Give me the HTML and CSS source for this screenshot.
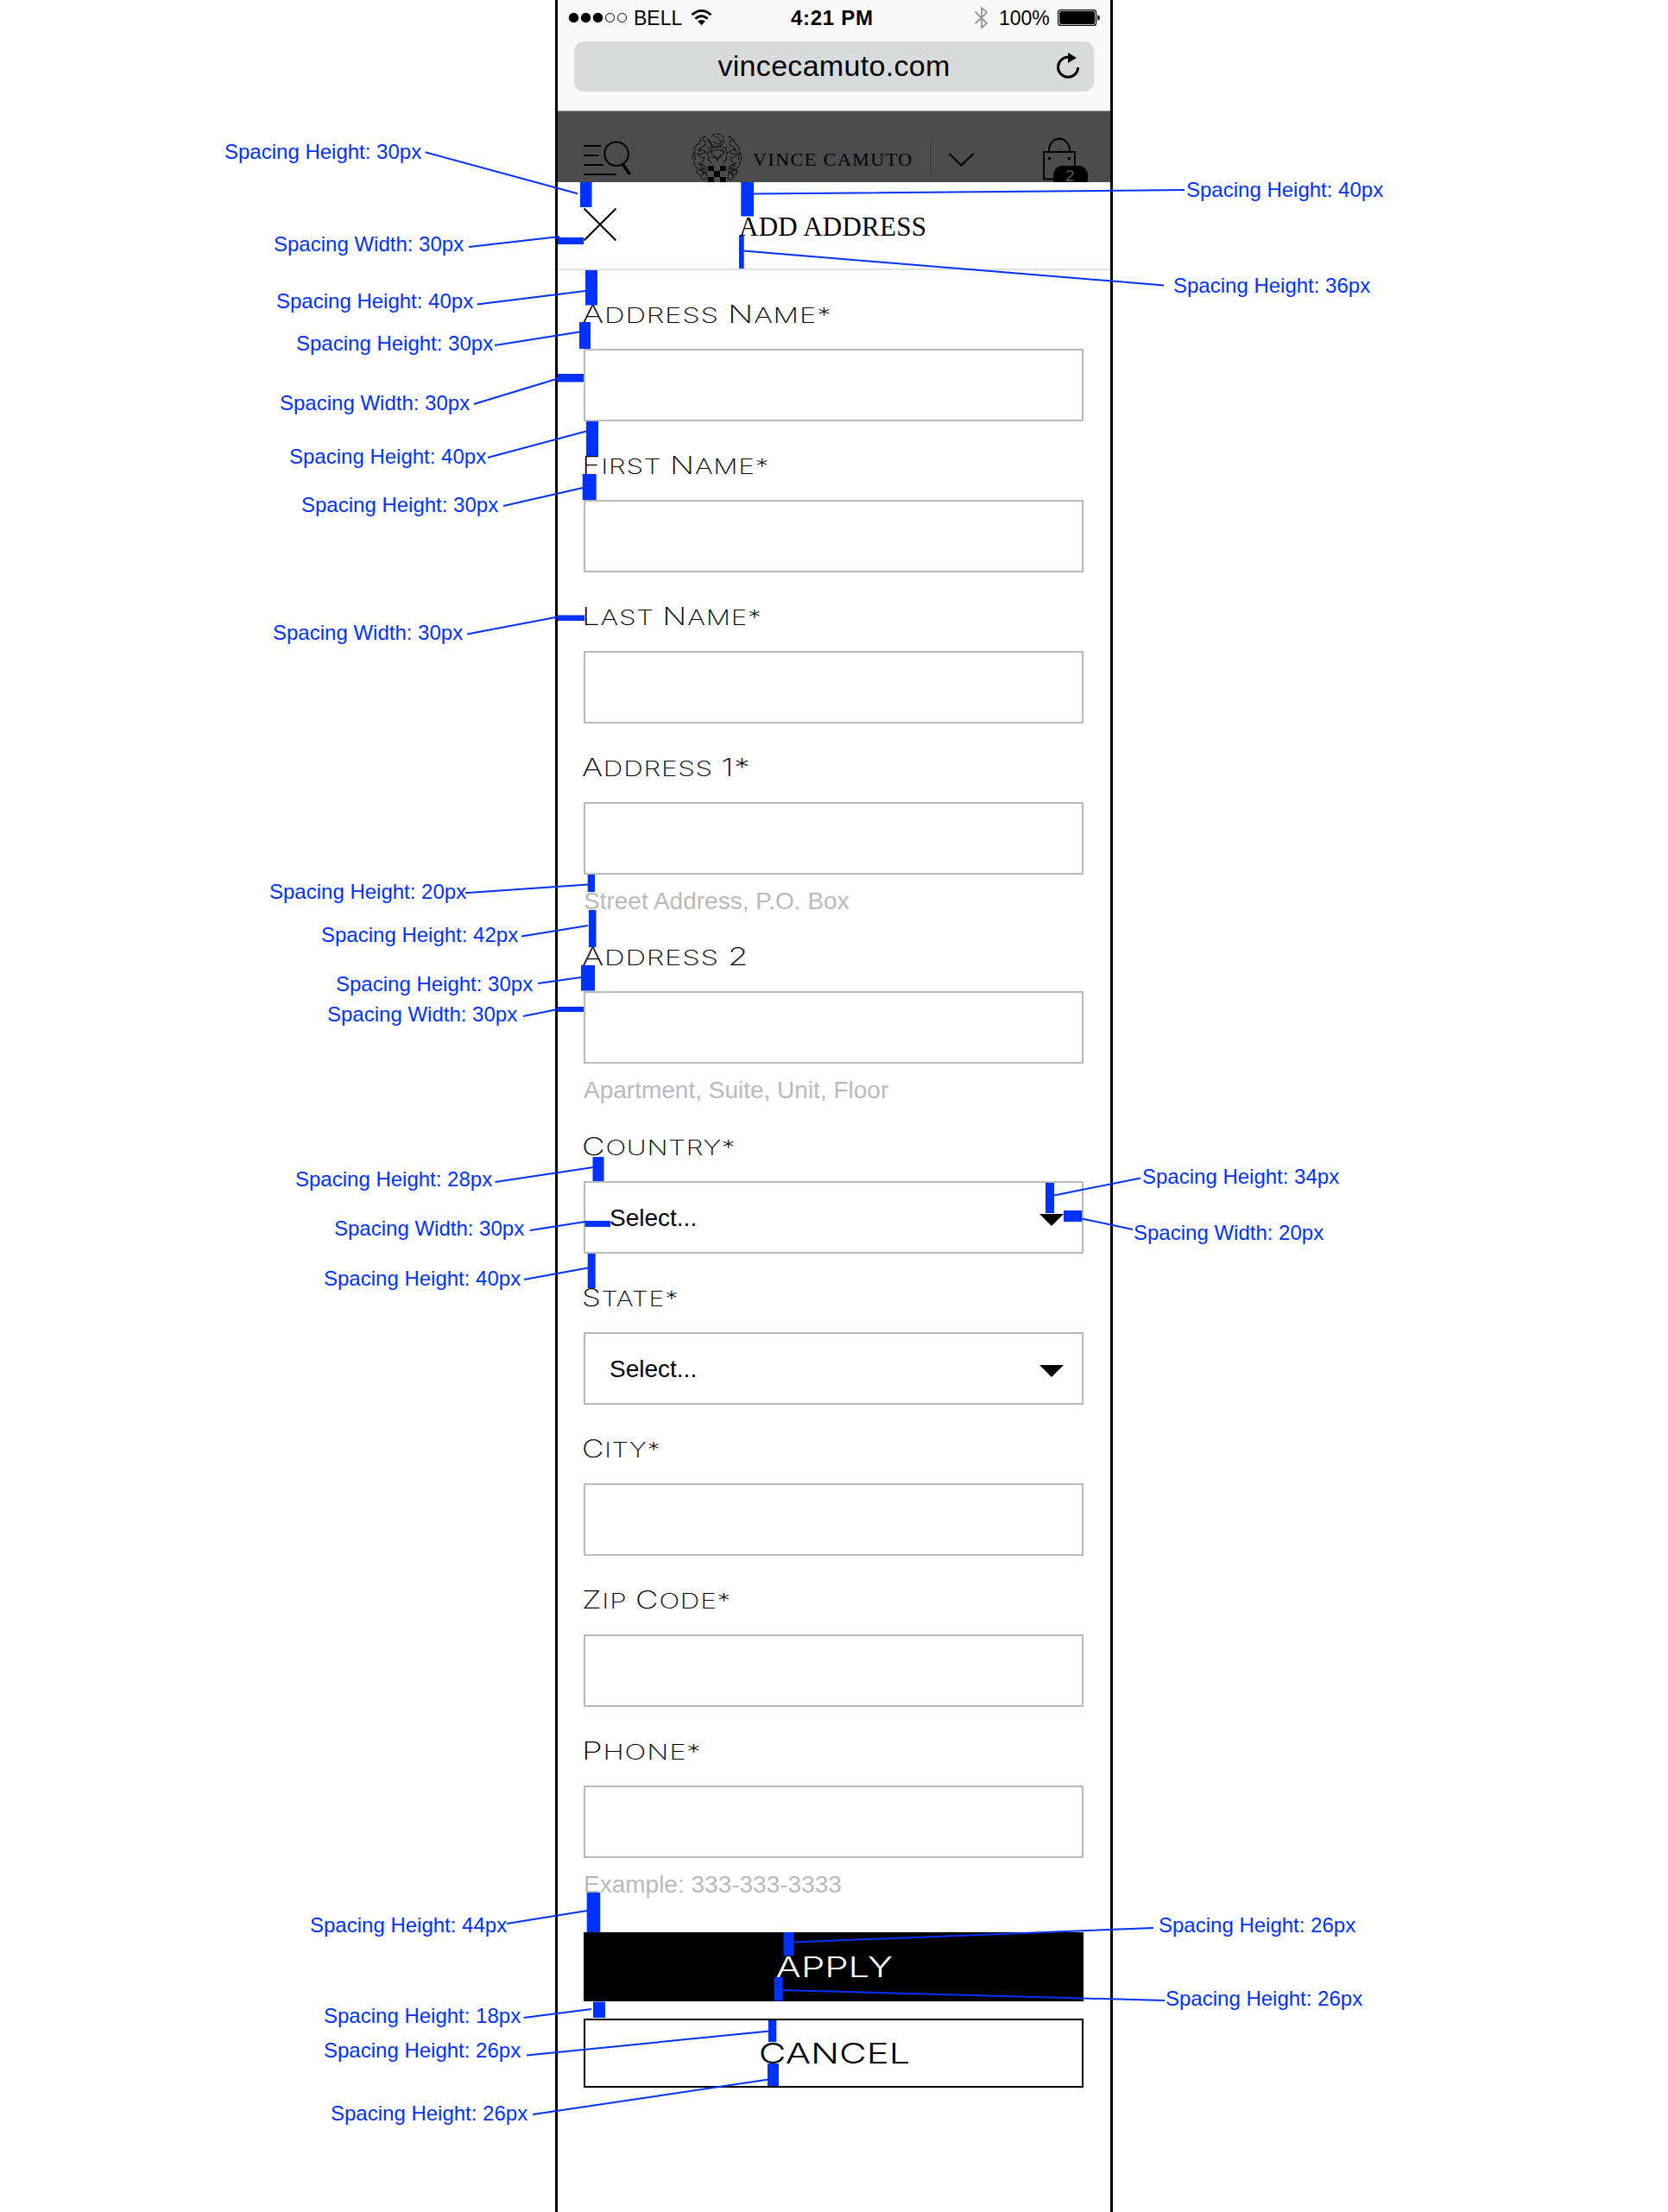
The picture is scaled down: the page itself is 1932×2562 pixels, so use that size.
FILE: index.html
```html
<!DOCTYPE html>
<html lang="en">
<head>
<meta charset="utf-8">
<title>Add Address</title>
<link rel="stylesheet" href="styles.css">
</head>
<body>
<main class="phone">
  <div class="browser">
    <div class="status">
      <svg class="signal" viewBox="657 0 73 42" width="73" height="42"><circle cx="664.5" cy="20.5" r="5.7"/><circle cx="678.5" cy="20.5" r="5.7"/><circle cx="692.5" cy="20.5" r="5.7"/><circle class="ring" cx="706.5" cy="20.5" r="5"/><circle class="ring" cx="720.5" cy="20.5" r="5"/></svg>
      <span class="carrier">BELL</span>
      <svg class="wifi" viewBox="800 0 26 42" width="26" height="42"><path class="w" d="M801.5 17.2Q812.5 7.5 823.5 17.2M805.3 21.6Q812.5 15.3 819.7 21.6"/><path d="M808 24.6Q812.5 21.4 817 24.6L812.5 29.3Z"/></svg>
      <span class="time">4:21 PM</span>
      <svg class="bt" viewBox="1129 0 18 42" width="18" height="42"><path d="M1130.5 13.5L1144 27L1138 32V9L1144 14.5L1130.5 27.5"/></svg>
      <span class="charge">100%</span>
      <svg class="battery" viewBox="1225 0 52 42" width="52" height="42"><rect class="shell" x="1226.6" y="11.6" width="44" height="17.8" rx="3"/><rect x="1228.2" y="13" width="41" height="15" rx="2"/><path d="M1272.3 17.2Q1275 18 1275 20.5T1272.3 23.8Z"/></svg>
    </div>
    <div class="url"><span>vincecamuto.com</span>
      <svg class="reload" viewBox="1222 48 30 58" width="30" height="58"><path class="arc" d="M1238 66.2A11.6 11.6 0 1 0 1248.7 78"/><path d="M1237 61L1247 67L1237 73Z"/></svg>
    </div>
  </div>
  <header class="site">
    <svg class="menu" viewBox="675 129 58 82" width="58" height="82"><path d="M676 169H696M676 180H694M676 191H699M676 202H714"/><circle cx="714" cy="178.3" r="13.8"/><path class="handle" d="M721.5 190.5L729.5 202"/></svg>
    <svg class="crest" viewBox="800 129 62 82" width="62" height="82">
      <g class="leaf"><path d="M824 158q7-6 13 0q4 7-3 11q-5 3-9-1q-4-3-6-8M828 158q5 1 7 7M821 162q5 6 3 10q6-4 11-2q3 3 5 0M818 158q-7 1-8 8q-7 3-5 10q-5 5-1 11q0 6 4 8q-3 6 3 7q0 6 6 6M843 158q7 1 8 8q7 3 5 10q5 5 1 11q0 6-4 8q3 6-3 7q0 6-6 6"/><path d="M814 162q5 2 2 7q-5 1-7 6q5-3 8 1q-5 4-9 2q2 6 8 4q-1 7-7 8q7 0 9 5q-4 3-7 2q4 4 8 3M848 162q-5 2-2 7q5 1 7 6q-5-3-8 1q5 4 9 2q-2 6-8 4q1 7 7 8q-7 0-9 5q4 3 7 2q-4 4-8 3"/><path d="M820 170q3 4-1 7q3 5 1 9M842 170q-3 4 1 7q-3 5-1 9M822 176q9-5 18 0q-7 4-9 10q-3-7-9-10M821 185l4 5M841 184l-4 6M824 181q6 5 12 0M803 177q4 3 2 8M858 177q-4 3-2 8M813 190l-3 7 5-3-1 9 4-5 1 10M849 190l3 7-5-3 1 9-4-5-1 10M826 164l6 3 5-3"/></g>
      <path class="shield" d="M820 190H842V211H820Z"/><path d="M820 192h7v6h-7zM834 192h7v6h-7zM827 198h7v7h-7zM820 205h7v6h-7zM834 205h7v6h-7z"/>
    </svg>
    <span class="brand">VINCE CAMUTO</span>
    <i class="rule"></i>
    <svg class="chevron" viewBox="1098 129 31 82" width="31" height="82"><path d="M1099.5 178L1113.5 191.5L1127.5 178"/></svg>
    <svg class="bag" viewBox="1207 129 55 82" width="55" height="82"><path d="M1209 176H1245V207.5H1209ZM1215 176V174A12 13.2 0 0 1 1239 174V176"/><circle cx="1215.5" cy="183.5" r="1.8"/><circle cx="1238.5" cy="183.5" r="1.8"/><rect x="1220" y="192" width="40" height="26" rx="11"/><text x="1234" y="210">2</text></svg>
  </header>
  <div class="heading">
    <svg class="close" viewBox="0 0 40 40" width="40" height="40"><path d="M1.5 1.5L38.5 38.5M38.5 1.5L1.5 38.5"/></svg>
    <h1>ADD ADDRESS</h1>
  </div>
  <form class="form">
    <div class="field"><label class="wide"><b>Address</b> <b>Name*</b></label><div class="box"></div></div>
    <div class="field"><label><b>First</b> <b>Name*</b></label><div class="box"></div></div>
    <div class="field"><label><b>Last</b> <b>Name*</b></label><div class="box"></div></div>
    <div class="field"><label><b>Address</b> <b>1*</b></label><div class="box"></div><p class="hint">Street Address, P.O. Box</p></div>
    <div class="field"><label class="wide"><b>Address</b> <b>2</b></label><div class="box"></div><p class="hint">Apartment, Suite, Unit, Floor</p></div>
    <div class="field country"><label><b>Country*</b></label><div class="box select">Select...<i class="caret"></i></div></div>
    <div class="field"><label class="narrow"><b>State*</b></label><div class="box select">Select...<i class="caret"></i></div></div>
    <div class="field"><label class="narrow"><b>City*</b></label><div class="box"></div></div>
    <div class="field"><label><b>Zip</b> <b>Code*</b></label><div class="box"></div></div>
    <div class="field"><label class="wide"><b>Phone*</b></label><div class="box"></div><p class="hint">Example: 333-333-3333</p></div>
    <div class="actions">
      <div class="btn apply"><span>APPLY</span></div>
      <div class="btn cancel"><span>CANCEL</span></div>
    </div>
  </form>
</main>
<svg class="notes" viewBox="0 0 1932 2562" width="1932" height="2562">
  <g class="bars">
    <rect x="672" y="211" width="13.5" height="29"/><rect x="646" y="275" width="30" height="8"/><rect x="678" y="313" width="14" height="40.5"/><rect x="671" y="373" width="13" height="31"/><rect x="646" y="433" width="30" height="9.5"/><rect x="679" y="488" width="14" height="40"/><rect x="674.7" y="549" width="16" height="30"/><rect x="646" y="712.5" width="31" height="6.5"/><rect x="680.7" y="1013" width="8.3" height="20"/><rect x="682" y="1054" width="8.5" height="43"/><rect x="673" y="1118" width="16" height="29.5"/><rect x="646" y="1166" width="30" height="6"/><rect x="686.5" y="1340" width="13" height="28"/><rect x="677.5" y="1414" width="29.5" height="7"/><rect x="680.7" y="1452" width="9" height="40"/><rect x="1211" y="1370" width="10" height="35"/><rect x="1232" y="1402" width="21" height="13"/><rect x="679.7" y="2192" width="15.5" height="46"/><rect x="687" y="2318.5" width="14" height="18.5"/><rect x="890" y="2340" width="9.3" height="25"/><rect x="889" y="2390" width="13" height="26"/><rect x="907.5" y="2238" width="12" height="27"/><rect x="896.7" y="2290" width="10" height="27.5"/><rect x="858.3" y="211" width="14.7" height="39.5"/><rect x="856" y="273" width="5.7" height="38"/>
  </g>
  <path class="leaders" d="M492.6 176.3L669 224.3M543 286L648 274M552.7 352.5L678 337M573 400L671 384.5M549 468L646 438.5M565 530L679 499.5M583 586L675 565M541 734.5L646 714.5M539 1034.3L681 1024.5M604 1084.5L681 1072M623 1139L673 1132M606 1177L646 1169M573.5 1369L687 1352M614 1425L678 1415M607 1482L681 1468.5M1321 1364.5L1221 1384.5M1312 1424L1253 1411.5M587 2228L680 2213M606.5 2337L685 2327M610 2380.5L891 2352.5M617 2449L890 2408.5M1336 2233L919 2249.5M1349 2317L906 2305M1372 220L873 224.5M1348 330.5L861 290.5"/>
  <g class="captions">
    <text x="260" y="184">Spacing Height: 30px</text>
    <text x="317" y="291">Spacing Width: 30px</text>
    <text x="320" y="357">Spacing Height: 40px</text>
    <text x="343" y="406">Spacing Height: 30px</text>
    <text x="324" y="475">Spacing Width: 30px</text>
    <text x="335" y="537">Spacing Height: 40px</text>
    <text x="349" y="593">Spacing Height: 30px</text>
    <text x="316" y="741">Spacing Width: 30px</text>
    <text x="312" y="1041">Spacing Height: 20px</text>
    <text x="372" y="1091">Spacing Height: 42px</text>
    <text x="389" y="1148">Spacing Height: 30px</text>
    <text x="379" y="1183">Spacing Width: 30px</text>
    <text x="342" y="1374">Spacing Height: 28px</text>
    <text x="387" y="1431">Spacing Width: 30px</text>
    <text x="375" y="1489">Spacing Height: 40px</text>
    <text x="1323" y="1371">Spacing Height: 34px</text>
    <text x="1313" y="1436">Spacing Width: 20px</text>
    <text x="359" y="2238">Spacing Height: 44px</text>
    <text x="375" y="2343">Spacing Height: 18px</text>
    <text x="375" y="2383">Spacing Height: 26px</text>
    <text x="383" y="2456">Spacing Height: 26px</text>
    <text x="1342" y="2238">Spacing Height: 26px</text>
    <text x="1350" y="2323">Spacing Height: 26px</text>
    <text x="1374" y="228">Spacing Height: 40px</text>
    <text x="1359" y="339">Spacing Height: 36px</text>
  </g>
</svg>
</body>
</html>
```
FILE: styles.css
```css
* { box-sizing: border-box; }
body {
  margin: 0;
  width: 1932px;
  height: 2562px;
  position: relative;
  overflow: hidden;
  background: #fff;
  color: #000;
  font-family: "Liberation Sans", Arial, sans-serif;
}
svg { display: block; flex: none; }

.phone {
  width: 646px;
  height: 2562px;
  margin-left: 643px;
  border: solid #000;
  border-width: 0 3px;
}

/* Browser chrome */
.browser {
  height: 129px;
  background: #f9f9f9;
  border-bottom: 1px solid #a6a6a6;
}
.status {
  display: flex;
  height: 48px;
  padding-left: 11px;
  font-size: 23px;
  line-height: 42px;
  white-space: nowrap;
}
.ring { fill: none; stroke: #000; stroke-width: 1; }
.carrier { width: 66px; margin-left: 4px; }
.wifi { margin-left: 0; }
.wifi .w { fill: none; stroke: #000; stroke-width: 2.8; }
.time { width: 212px; margin-left: 90px; font-size: 24px; font-weight: bold; letter-spacing: .7px; }
.bt { margin-left: 0; }
.bt path { fill: none; stroke: #999; stroke-width: 1.8; }
.charge { width: 66px; margin-left: 11px; }
.battery { margin-left: 1px; }
.shell { fill: none; stroke: #000; stroke-width: 1.2; }
.url {
  display: flex;
  justify-content: center;
  position: relative;
  width: 602px;
  height: 58px;
  margin-left: 19px;
  border-radius: 11px;
  background: #d9dbda;
  font-size: 34px;
  line-height: 56px;
  letter-spacing: .3px;
}
.reload { position: absolute; right: 15px; top: 0; }
.reload .arc { fill: none; stroke: #000; stroke-width: 3; }

/* Dimmed site header */
.site {
  display: flex;
  height: 82px;
  padding-left: 29px;
  overflow: hidden;
  background: #4c4c4c;
}
.menu path, .menu circle { fill: none; stroke: #000; stroke-width: 2; }
.menu .handle { stroke-width: 3.6; }
.crest { margin-left: 67px; }
.leaf path { fill: none; stroke: #111; stroke-width: 1.2; stroke-dasharray: 5 1; }
.shield { fill: #4c4c4c; }
.brand {
  width: 206px;
  margin-left: 10px;
  font: 22px/112px "Liberation Serif", "Times New Roman", serif;
  letter-spacing: 1.5px;
  white-space: nowrap;
}
.rule { width: 2px; height: 40px; margin: 34px 19px 0 -1px; background: #434343; }
.chevron path { fill: none; stroke: #000; stroke-width: 2; }
.bag { margin-left: 78px; }
.bag path { fill: none; stroke: #000; stroke-width: 2; }
.bag text { fill: #5a5a5a; font-size: 19px; }

/* Dialog title row */
.heading {
  display: flex;
  height: 102px;
  padding: 29px 0 0 29px;
  border-bottom: 2px solid #e0e0e0;
}
.close path { fill: none; stroke: #000; stroke-width: 2; }
h1 {
  margin: 0 0 0 141px;
  font: 31px/45px "Liberation Serif", "Times New Roman", serif;
  letter-spacing: .25px;
}

/* Form */
.form { padding: 0 31px 0 30px; }
.field { margin-top: 16px; }
.country { margin-top: 17px; }
label {
  display: block;
  width: max-content;
  height: 75px;
  margin-left: -2px;
  font: 200 24px/73px Inter, sans-serif;
  letter-spacing: .6px;
  text-transform: uppercase;
  transform: scaleX(1.31);
  transform-origin: 0 0;
}
.wide { transform: scaleX(1.37); }
.narrow { transform: scaleX(1.26); }
label b { display: inline-block; font-weight: 200; }
label b::first-letter { font-size: 28px; line-height: 1; }
.box { height: 84px; border: 2px solid #bababa; }
.select {
  display: flex;
  justify-content: space-between;
  padding: 0 21px 0 28px;
  font-size: 28px;
  line-height: 82px;
}
.caret {
  width: 28px;
  height: 14px;
  margin-top: 36px;
  background: #000;
  clip-path: polygon(0 0, 100% 0, 50% 100%);
}
.hint { margin: 0 0 -18px; font-size: 28px; line-height: 62px; color: #bababa; }

.actions { display: flex; flex-direction: column; gap: 20px; margin-top: 42px; }
.btn {
  height: 80px;
  border: 2px solid #000;
  text-align: center;
  font: 300 33px/76px Inter, sans-serif;
}
.btn span { display: inline-block; transform: translateX(1px) scaleX(1.32); }
.apply { background: #000; color: #fff; }

/* Redline annotations over the mockup */
.notes { position: absolute; left: 0; top: 0; }
.bars { fill: #0032ff; }
.leaders { fill: none; stroke: #0032ff; stroke-width: 2; }
.captions { fill: #0032ff; font-size: 24px; }
```
